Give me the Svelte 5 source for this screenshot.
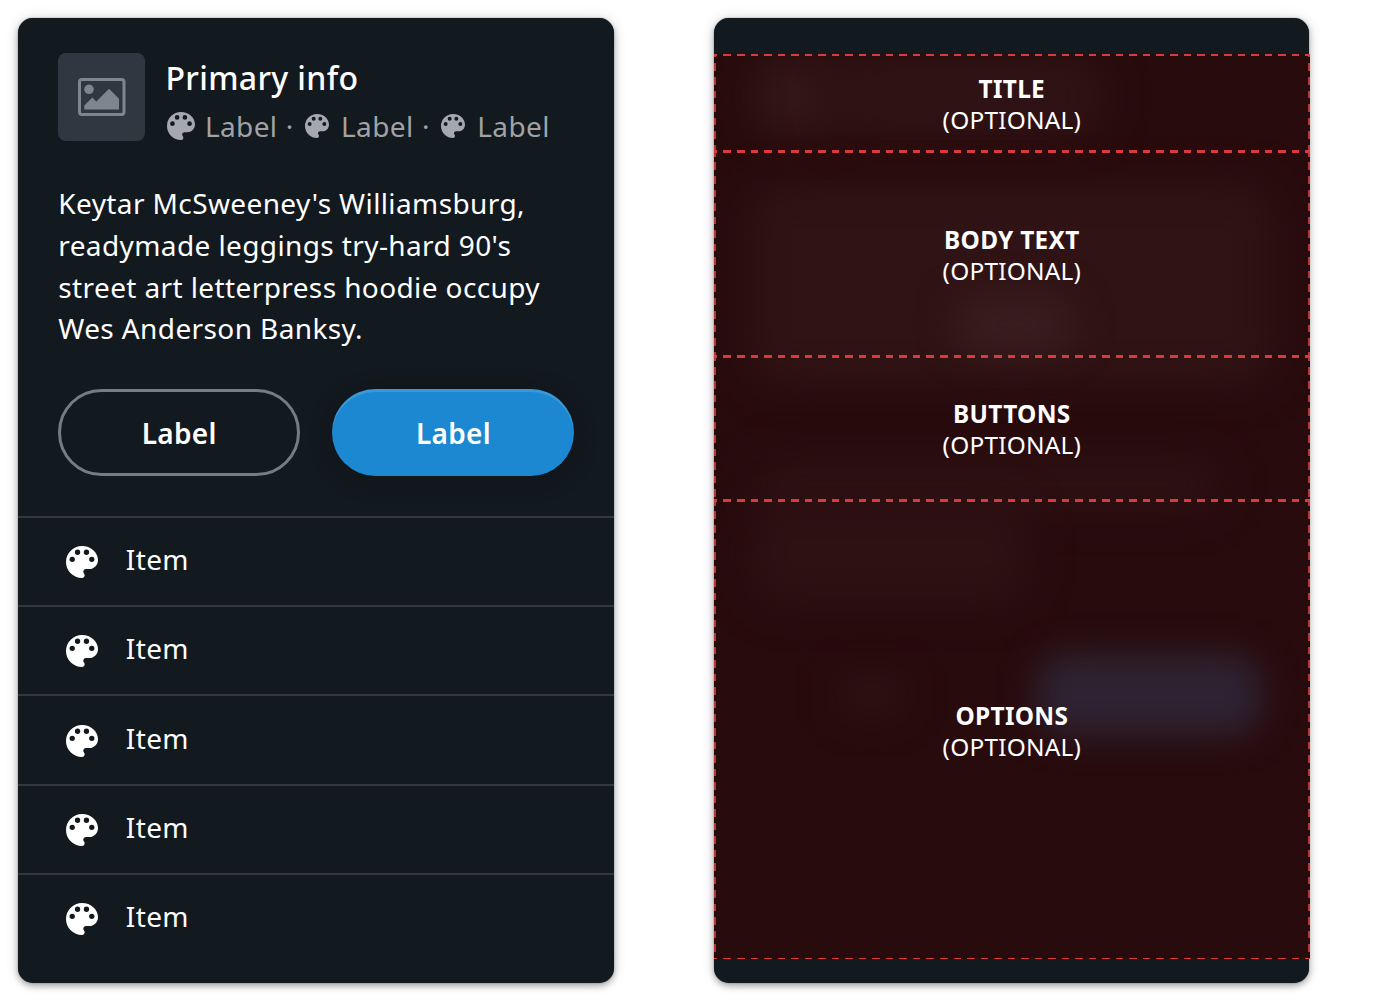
<script>
  const meta = [28, 24, 24];
  const items = [1, 2, 3, 4, 5];
  const lines = [
    "Keytar McSweeney's Williamsburg,",
    "readymade leggings try-hard 90's",
    'street art letterpress hoodie occupy',
    'Wes Anderson Banksy.'
  ];
  const slots = ['title', 'body text', 'buttons', 'options'];
  const palette =
    'M12 3a9 9 0 0 0 0 18c.83 0 1.5-.67 1.5-1.5 0-.39-.15-.74-.39-1.01-.23-.26-.38-.61-.38-.99 0-.83.67-1.5 1.5-1.5H16c2.76 0 5-2.24 5-5 0-4.42-4.03-8-9-8zm-5.5 9a1.5 1.5 0 1 1 0-3 1.5 1.5 0 0 1 0 3zm3-4a1.5 1.5 0 1 1 0-3 1.5 1.5 0 0 1 0 3zm5 0a1.5 1.5 0 1 1 0-3 1.5 1.5 0 0 1 0 3zm3 4a1.5 1.5 0 1 1 0-3 1.5 1.5 0 0 1 0 3z';
</script>

<main>
  <article class="card">
    <header>
      <div class="thumb">
        <svg width="48" height="38" viewBox="0 0 48 38">
          <rect x="1.5" y="1.5" width="44.5" height="35" rx="2.5" fill="none" stroke="currentColor" stroke-width="3" />
          <circle cx="11" cy="11.3" r="4.8" fill="currentColor" />
          <path d="M6.3 31.5V27.5L14.3 19.5L18.3 23.5L31 10.8L41 20.8V31.5Z" fill="currentColor" />
        </svg>
      </div>
      <div class="heading">
        <h1>Primary info</h1>
        <div class="meta">
          {#each meta as size, i}
            {#if i > 0}<span class="dot">·</span>{/if}
            <svg class:small={i > 0} width={size} height={size} viewBox="3 3 18 18"><path d={palette} fill="currentColor" /></svg>
            <span class="metalabel">Label</span>
          {/each}
        </div>
      </div>
    </header>
    <p class="body">{#each lines as line}<span>{line}</span>{/each}</p>
    <div class="actions">
      <button class="outline">Label</button>
      <button class="solid">Label</button>
    </div>
    <ul>
      {#each items as item (item)}
        <li>
          <svg width="32" height="32" viewBox="3 3 18 18"><path d={palette} fill="currentColor" /></svg>
          <span>Item</span>
        </li>
      {/each}
    </ul>
  </article>

  <article class="card anatomy">
    <div class="overlay">
      <div class="glows">
        <i class="glow g-thumb"></i>
        <i class="glow g-title"></i>
        <i class="glow g-body"></i>
        <i class="glow g-spot"></i>
        <i class="glow g-text"></i>
        <i class="glow g-text2"></i>
        <i class="glow g-label"></i>
        <i class="glow g-button"></i>
      </div>
      {#each slots as slot, i}
        <section class="slot slot{i}">
          <strong>{slot}</strong>
          <span>(optional)</span>
        </section>
      {/each}
    </div>
  </article>
</main>

<style>
  :global(body) { background: #fff; }
  main {
    box-sizing: border-box;
    width: 1382px;
    height: 1002px;
    padding: 17.6px 18.3px;
    display: flex;
    gap: 99.7px;
    overflow: hidden;
    font-family: 'Noto Sans', sans-serif;
    font-size: 28px;
    letter-spacing: 0.39px;
    color: #fff;
  }
  .card {
    box-sizing: border-box;
    flex: none;
    width: 595.7px;
    height: 965px;
    border-radius: 15px;
    background: #12191f;
    box-shadow: 0 0 1px rgba(0, 0, 0, 0.75), 0 3px 6px rgba(0, 0, 0, 0.3), 0 0 14px rgba(0, 0, 0, 0.14);
  }
  header {
    display: flex;
    gap: 20px;
    padding: 35.6px 40px 0 39.7px;
    height: 87.4px;
  }
  .thumb {
    flex: none;
    width: 87.5px;
    height: 87.5px;
    border-radius: 8px;
    background: #2f3840;
    color: #7d868f;
    display: grid;
    place-items: center;
  }
  .thumb svg { margin-left: 1px; }
  h1 {
    margin: 0;
    padding-top: 2.6px;
    font-size: 32px;
    font-weight: 500;
    line-height: 44px;
    letter-spacing: 0.34px;
    white-space: nowrap;
  }
  .meta {
    display: flex;
    align-items: center;
    height: 44px;
    margin-top: 4.2px;
    color: #a5a9ae;
    white-space: nowrap;
  }
  .meta svg { margin: 0 10px 0 1.4px; }
  .meta svg.small { margin: 0 12px 0 0; }
  .metalabel { color: #a0a3a5; }
  .dot { width: 27.6px; box-sizing: border-box; padding-right: 3px; text-align: center; color: #a0a3a5; }
  .body {
    margin: 42.6px 40px 0;
    line-height: 41.75px;
  }
  .body span { display: block; white-space: nowrap; }
  .actions {
    display: flex;
    gap: 32px;
    margin: 38.4px 39.5px 0;
  }
  button {
    box-sizing: border-box;
    flex: 1 1 0;
    min-width: 242px;
    height: 87.5px;
    padding: 1px 0 0;
    border: 0;
    border-radius: 44px;
    font: 600 28px 'Noto Sans', sans-serif;
    letter-spacing: 0.3px;
    color: #fff;
  }
  .outline { background: transparent; border: 3px solid #747d86; }
  .solid {
    background: #1b88d1;
    box-shadow: inset 0 3px 0 rgba(255, 255, 255, 0.14), 0 4px 20px rgba(17, 17, 20, 0.5);
  }
  ul { margin: 39.6px 0 0; padding: 0; list-style: none; }
  li {
    box-sizing: border-box;
    height: 89.4px;
    border-top: 2px solid #32373f;
    display: flex;
    align-items: center;
    gap: 28px;
    padding-left: 47.5px;
  }
  li svg { margin-top: 1px; }
  li span { margin-top: -5px; }

  .anatomy { padding-top: 36.5px; }
  .overlay {
    position: relative;
    width: 596.3px;
    height: 905px;
    background: #280b0d;
    display: flex;
    flex-direction: column;
  }
  .slot {
    --dash-x: repeating-linear-gradient(90deg, #d73b3d 0 3.5px, transparent 3.5px 9.5px, #d73b3d 9.5px 13.53px);
    --dash-y: repeating-linear-gradient(180deg, #b93638 0 3.5px, transparent 3.5px 9.5px, #b93638 9.5px 13.53px);
    position: relative;
    box-sizing: border-box;
    display: flex;
    flex-direction: column;
    align-items: center;
    justify-content: center;
    font-size: 24.4px;
    line-height: 31px;
    letter-spacing: 0.22px;
    text-transform: uppercase;
    background:
      var(--dash-x) 0 100% / 100% 3px no-repeat,
      var(--dash-y) 0 0 / 2px 100% no-repeat,
      var(--dash-y) 100% 0 / 2px 100% no-repeat;
  }
  .slot strong { font-weight: 700; letter-spacing: 0.3px; }
  .slot0 {
    height: 99px;
    padding-top: 0.4px;
    background:
      var(--dash-x) 0 0 / 100% 2px no-repeat,
      var(--dash-x) 0 100% / 100% 3px no-repeat,
      var(--dash-y) 0 0 / 2px 100% no-repeat,
      var(--dash-y) 100% 0 / 2px 100% no-repeat;
  }
  .slot1 { height: 204.5px; padding-bottom: 0.6px; }
  .slot2 { height: 144px; padding-bottom: 1.6px; }
  .slot3 {
    height: 457.5px;
    padding-top: 0.4px;
    background:
      var(--dash-x) 0 100% / 100% 1.5px no-repeat,
      var(--dash-y) 0 0 / 2px 100% no-repeat,
      var(--dash-y) 100% 0 / 2px 100% no-repeat;
  }
  .glows { position: absolute; inset: 0; overflow: hidden; }
  .glow { position: absolute; border-radius: 30px; filter: blur(20px); background: #311415; }
  .g-thumb { left: 40px; top: 5px; width: 85px; height: 75px; background: #351819; }
  .g-title { left: 110px; top: 2px; width: 280px; height: 80px; background: #301314; }
  .g-body { left: 35px; top: 130px; width: 525px; height: 200px; background: #301314; }
  .g-spot { left: 240px; top: 240px; width: 120px; height: 60px; background: #3a1d1f; filter: blur(18px); }
  .g-text { left: 38px; top: 405px; width: 470px; height: 50px; background: #2e1113; }
  .g-text2 { left: 38px; top: 450px; width: 275px; height: 100px; background: #2e1113; }
  .g-label { left: 125px; top: 626px; width: 65px; height: 30px; background: #321516; }
  .g-button { left: 322px; top: 600px; width: 226px; height: 82px; background: #2e2333; filter: blur(17px); }
</style>
